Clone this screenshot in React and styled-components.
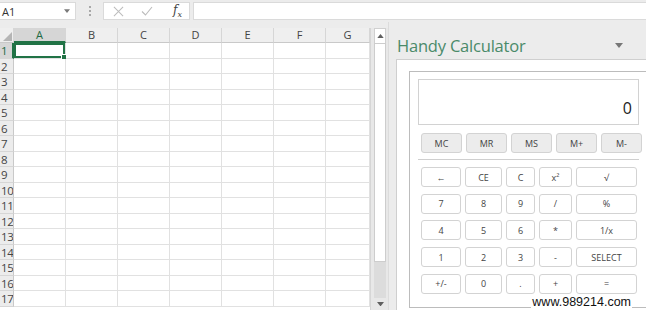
import React from 'react';
import styled, { createGlobalStyle } from 'styled-components';

const GlobalStyle = createGlobalStyle`
  html, body {
    margin: 0;
    padding: 0;
  }
  body {
    font-family: "Open Sans", "Noto Sans", sans-serif;
    background: #ececec;
  }
  * {
    box-sizing: border-box;
  }
`;

const columns = ['A', 'B', 'C', 'D', 'E', 'F', 'G'];
const rows = Array.from({ length: 17 }, (_, i) => i + 1);

const memoryKeys = ['MC', 'MR', 'MS', 'M+', 'M-'];
const keys = [
  ['←', 'CE', 'C', 'x²', '√'],
  ['7', '8', '9', '/', '%'],
  ['4', '5', '6', '*', '1/x'],
  ['1', '2', '3', '-', 'SELECT'],
  ['+/-', '0', '.', '+', '='],
];

const Caret = ({ color = '#6d6d6d', size = 7 }) => (
  <svg width={size} height={size / 2 + 1} viewBox="0 0 8 5">
    <path d="M0 0 L8 0 L4 5 Z" fill={color} />
  </svg>
);

const App = () => {
  return (
    <Page>
      <GlobalStyle />
      <TopBar>
        <NameBox>
          <span>A1</span>
          <Caret color="#7a7a7a" size={6} />
        </NameBox>
        <Grip>
          <i />
          <i />
          <i />
        </Grip>
        <FxBox>
          <svg width="11" height="11" viewBox="0 0 12 12">
            <path d="M1 1 L11 11 M11 1 L1 11" stroke="#bcbcbc" strokeWidth="1.1" />
          </svg>
          <svg width="12" height="10" viewBox="0 0 12 10">
            <path d="M1 5.5 L4.5 9 L11 1" stroke="#bcbcbc" strokeWidth="1.1" fill="none" />
          </svg>
          <FxLabel>
            f<sub>x</sub>
          </FxLabel>
        </FxBox>
        <FormulaInput />
      </TopBar>

      <Main>
        <Sheet>
          <Grid>
            <Corner>
              <svg width="9" height="9" viewBox="0 0 9 9">
                <path d="M9 0 L9 9 L0 9 Z" fill="#b5b5b5" />
              </svg>
            </Corner>
            {columns.map((c) => (
              <ColHeader key={c} $active={c === 'A'}>
                {c}
              </ColHeader>
            ))}
            {rows.map((r) => (
              <React.Fragment key={r}>
                <RowHeader $active={r === 1}>{r}</RowHeader>
                {columns.map((c) => (
                  <Cell key={c} $selected={r === 1 && c === 'A'} />
                ))}
              </React.Fragment>
            ))}
          </Grid>
          <ScrollBar>
            <ScrollButton>
              <svg width="7" height="4" viewBox="0 0 8 5">
                <path d="M0 5 L8 5 L4 0 Z" fill="#606060" />
              </svg>
            </ScrollButton>
            <Thumb />
            <Track />
            <ScrollButton $bottom>
              <Caret color="#606060" size={7} />
            </ScrollButton>
          </ScrollBar>
        </Sheet>

        <Pane>
          <PaneHeader>
            <PaneTitle>Handy Calculator</PaneTitle>
            <Caret color="#777" size={8} />
          </PaneHeader>
          <PaneBody>
            <Frame>
              <Display>0</Display>
              <MemoryRow>
                {memoryKeys.map((k) => (
                  <MemoryKey key={k}>{k}</MemoryKey>
                ))}
              </MemoryRow>
              <Divider />
              <KeyGrid>
                {keys.flat().map((k, i) => (
                  <Key key={i}>{k}</Key>
                ))}
              </KeyGrid>
            </Frame>
          </PaneBody>
          <Watermark>www.989214.com</Watermark>
        </Pane>
      </Main>
    </Page>
  );
};

const Page = styled.div`
  width: 646px;
  height: 310px;
  background: #ececec;
  display: flex;
  flex-direction: column;
  overflow: hidden;
`;

const TopBar = styled.div`
  height: 22px;
  display: flex;
  align-items: center;
  padding: 2px 0;
`;

const NameBox = styled.div`
  width: 76px;
  height: 18px;
  background: #fff;
  border: 1px solid #dadada;
  border-left: none;
  display: flex;
  align-items: center;
  justify-content: space-between;
  padding: 0 5px 0 2px;
  font-size: 11px;
  color: #333;
`;

const Grip = styled.div`
  width: 27px;
  display: flex;
  flex-direction: column;
  align-items: center;
  gap: 2px;

  i {
    width: 2px;
    height: 2px;
    background: #a8a8a8;
  }
`;

const FxBox = styled.div`
  width: 87px;
  height: 18px;
  background: #fff;
  border: 1px solid #dadada;
  display: flex;
  align-items: center;
  gap: 17px;
  padding: 0 0 0 9px;
`;

const FxLabel = styled.span`
  font-family: "DejaVu Serif", "Liberation Serif", serif;
  font-style: italic;
  font-size: 12px;
  color: #444;
  margin-left: 3px;

  sub {
    font-size: 8px;
  }
`;

const FormulaInput = styled.div`
  flex: 1;
  height: 18px;
  margin-left: 3px;
  background: #fff;
  border: 1px solid #dadada;
  border-right: none;
`;

const Main = styled.div`
  flex: 1;
  display: flex;
  min-height: 0;
`;

const Sheet = styled.div`
  width: 388px;
  flex-shrink: 0;
  padding-top: 6px;
  display: flex;
  background: #ececec;
`;

const Grid = styled.div`
  width: 370px;
  display: grid;
  grid-template-columns: 14px repeat(6, 52px) 44px;
  grid-template-rows: 15px repeat(17, 15.5px);
  background: #fff;
  align-content: start;
`;

const Corner = styled.div`
  background: #efefef;
  border-right: 1px solid #d6d6d6;
  border-bottom: 1px solid #c9c9c9;
  display: flex;
  align-items: flex-end;
  justify-content: flex-end;
  padding: 0 1px 1px 0;
`;

const ColHeader = styled.div`
  background: ${(p) => (p.$active ? '#d6d6d6' : '#efefef')};
  color: ${(p) => (p.$active ? '#1f6b43' : '#444')};
  border-right: 1px solid #d6d6d6;
  border-bottom: ${(p) => (p.$active ? '2px solid #217346' : '1px solid #c9c9c9')};
  font-size: 11px;
  line-height: 14px;
  text-align: center;
`;

const RowHeader = styled.div`
  background: ${(p) => (p.$active ? '#d6d6d6' : '#ececec')};
  color: ${(p) => (p.$active ? '#1f6b43' : '#444')};
  border-right: ${(p) => (p.$active ? '2px solid #217346' : '1px solid #c9c9c9')};
  border-bottom: 1px solid #d6d6d6;
  font-size: 11.5px;
  line-height: 15px;
  padding-left: 1px;
  overflow: hidden;
  white-space: nowrap;
  letter-spacing: -0.3px;
`;

const Cell = styled.div`
  position: relative;
  border-right: 1px solid #e1e1e1;
  border-bottom: 1px solid #e1e1e1;
  box-shadow: ${(p) => (p.$selected ? 'inset 0 0 0 2px #217346' : 'none')};

  &::after {
    content: '';
    display: ${(p) => (p.$selected ? 'block' : 'none')};
    position: absolute;
    right: -2px;
    bottom: -2px;
    width: 4px;
    height: 4px;
    background: #217346;
    border: 1px solid #fff;
  }
`;

const ScrollBar = styled.div`
  width: 18px;
  display: flex;
  flex-direction: column;
  padding: 0 2px 0 3px;
  background: #e8e8e8;
  border-left: 1px solid #d6d6d6;
`;

const ScrollButton = styled.div`
  height: ${(p) => (p.$bottom ? '12px' : '15px')};
  display: flex;
  align-items: center;
  justify-content: center;
  background: ${(p) => (p.$bottom ? '#e8e8e8' : '#fff')};
  border: ${(p) => (p.$bottom ? 'none' : '1px solid #d0d0d0')};
  border-bottom: none;
`;

const Thumb = styled.div`
  height: 219px;
  background: #fff;
  border: 1px solid #cdcdcd;
`;

const Track = styled.div`
  flex: 1;
  background: #dcdcdc;
`;

const Pane = styled.div`
  position: relative;
  flex: 1;
  min-width: 0;
  display: flex;
  flex-direction: column;
  padding-left: 7px;
  background: #ececec;
  border-left: 1px solid #dcdcdc;
`;

const PaneHeader = styled.div`
  height: 37px;
  display: flex;
  align-items: center;
  justify-content: space-between;
  padding: 10px 23px 0 1px;
`;

const PaneTitle = styled.div`
  font-size: 16.5px;
  font-weight: 400;
  color: #4a8a69;
  letter-spacing: -0.2px;
`;

const PaneBody = styled.div`
  flex: 1;
  min-width: 0;
  background: #fff;
  border-left: 1px solid #cfcfcf;
  border-top: 1px solid #cfcfcf;
  padding: 11px 0 0 12px;
  overflow: hidden;
`;

const Frame = styled.div`
  width: 260px;
  height: 237px;
  border: 1px solid #bcbcbc;
  padding: 7px 0 0 8px;
`;

const Display = styled.div`
  width: 221px;
  height: 46px;
  border: 1px solid #d2d2d2;
  display: flex;
  align-items: flex-end;
  justify-content: flex-end;
  padding: 0 6px 5px 0;
  font-size: 16px;
  color: #222;
`;

const MemoryRow = styled.div`
  display: flex;
  gap: 4px;
  margin-top: 8px;
  padding-left: 3px;
`;

const MemoryKey = styled.div`
  width: 41px;
  height: 20px;
  background: #ececec;
  border: 1px solid #d3d3d3;
  border-radius: 3px;
  display: flex;
  align-items: center;
  justify-content: center;
  font-size: 9px;
  color: #444;
`;

const Divider = styled.div`
  width: 221px;
  height: 1px;
  margin-top: 6px;
  background: #cfcfcf;
`;

const KeyGrid = styled.div`
  display: grid;
  grid-template-columns: 40px 37px 29px 33px 61px;
  grid-auto-rows: 20px;
  column-gap: 4px;
  row-gap: 6.7px;
  margin-top: 7px;
  padding-left: 3px;
`;

const Key = styled.div`
  background: #fff;
  border: 1px solid #d3d3d3;
  border-radius: 3px;
  display: flex;
  align-items: center;
  justify-content: center;
  font-size: 9px;
  color: #444;
`;

const Watermark = styled.div`
  position: absolute;
  right: 14px;
  bottom: 1px;
  font-family: "Liberation Sans", Arial, sans-serif;
  font-size: 12.5px;
  color: #111;
  background: #fff;
  line-height: 14px;
  padding: 0 1px;
`;

export default App;
